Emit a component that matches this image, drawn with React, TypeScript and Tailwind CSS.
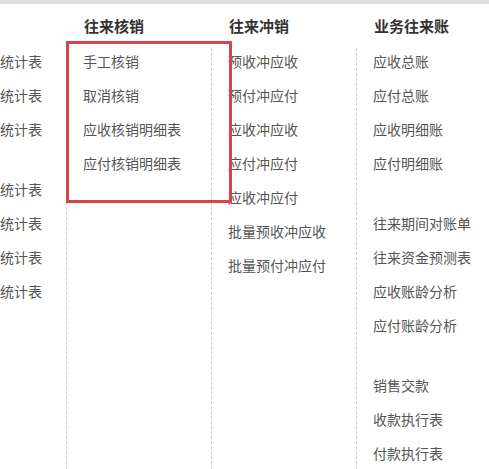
const columns: { title: string; groups: string[][] }[] = [
  {
    title: '',
    groups: [
      ['统计表', '统计表', '统计表'],
      ['统计表', '统计表', '统计表', '统计表'],
    ],
  },
  {
    title: '往来核销',
    groups: [['手工核销', '取消核销', '应收核销明细表', '应付核销明细表']],
  },
  {
    title: '往来冲销',
    groups: [['预收冲应收', '预付冲应付', '应收冲应收', '应付冲应付', '应收冲应付', '批量预收冲应收', '批量预付冲应付']],
  },
  {
    title: '业务往来账',
    groups: [
      ['应收总账', '应付总账', '应收明细账', '应付明细账'],
      ['往来期间对账单', '往来资金预测表', '应收账龄分析', '应付账龄分析'],
      ['销售交款', '收款执行表', '付款执行表'],
    ],
  },
];

export default function App() {
  return (
    <div
      className="relative h-[469px] w-[489px] overflow-hidden bg-white"
      style={{ fontFamily: '"Noto Sans CJK SC", "Noto Sans", sans-serif' }}
    >
      {/* top strip */}
      <div className="h-[4px] bg-[#dddddd]" />

      <div className="ml-[-16px] flex h-[465px]">
        {columns.map((col, i) => (
          <div key={i} className={`flex shrink-0 flex-col ${i === 0 ? 'w-[82px]' : 'w-[145px]'}`}>
            <div className="flex h-[44px] items-center pl-[18px] text-[15px] font-bold text-[#333333]">
              {col.title}
            </div>
            <div className={`flex-1 pl-[16px] ${i === 0 ? '' : 'border-l border-dashed border-[#cccccc]'}`}>
              {col.groups.map((g, gi) => (
                <div key={gi} className={`flex flex-col gap-2 ${gi > 0 ? 'mt-[34px]' : ''}`}>
                  {g.map((item, k) => (
                    <div key={k} className="whitespace-nowrap text-[14px] leading-[26px] text-[#555555]">
                      {item}
                    </div>
                  ))}
                </div>
              ))}
            </div>
          </div>
        ))}
      </div>

      {/* highlight box */}
      <div className="absolute left-[66px] top-[41px] h-[162px] w-[166px] border-[3px] border-[#d9444a]" />
    </div>
  );
}
